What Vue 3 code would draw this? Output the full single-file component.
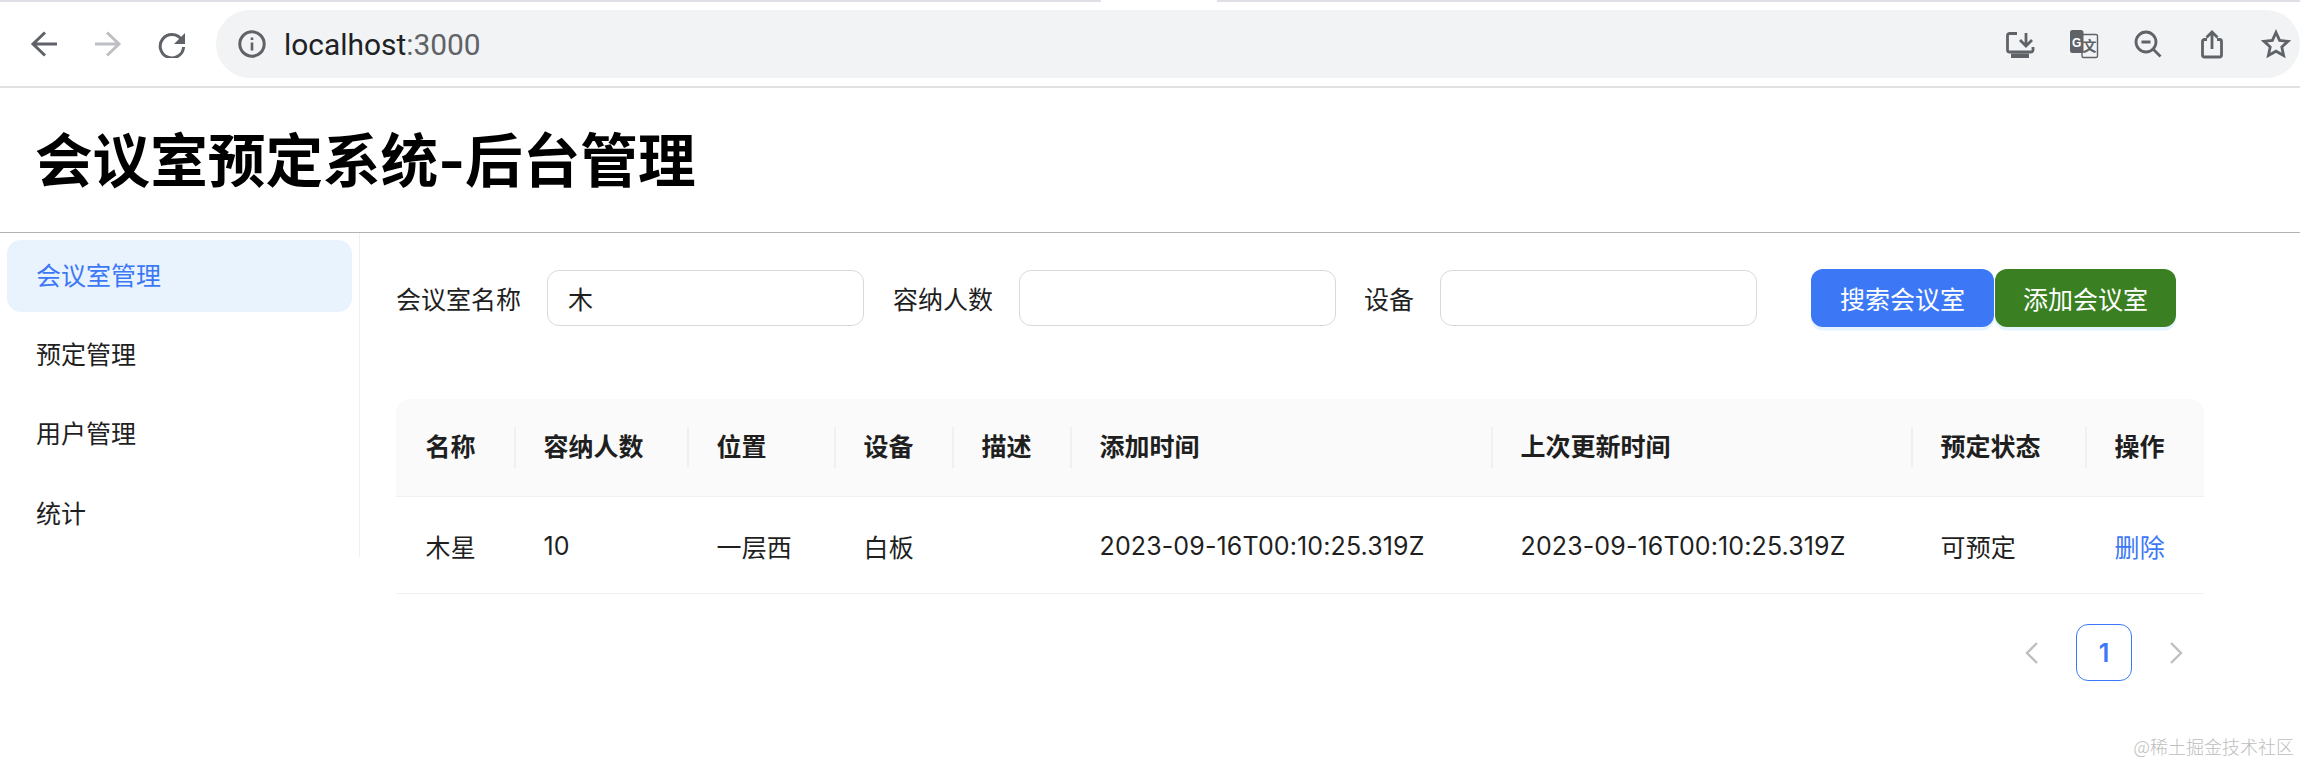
<script setup>
const menu = ['会议室管理', '预定管理', '用户管理', '统计']
const headers = ['名称', '容纳人数', '位置', '设备', '描述', '添加时间', '上次更新时间', '预定状态', '操作']
const cells = ['木星', '10', '一层西', '白板', '', '2023-09-16T00:10:25.319Z', '2023-09-16T00:10:25.319Z', '可预定']
</script>

<template>
  <div class="page">
    <div class="chrome">
      <div class="strip"><i></i><b></b><i></i></div>
      <div class="toolbar">
        <svg class="nav" viewBox="0 0 28 28"><path d="M15 2.500 3 14l12 11.500M3 14h24" stroke="#5f6368"/></svg>
        <svg class="nav" viewBox="0 0 28 28"><path d="M13 2.500 25 14 13 25.500M25 14H1" stroke="#bdbfc2"/></svg>
        <svg class="nav" viewBox="0 0 28 28">
          <path d="M23.500 9.500A11.700 11.700 0 1 0 25.600 17" stroke="#5f6368"/>
          <path d="M27 3v11H16z" fill="#5f6368"/>
        </svg>
        <div class="omnibox">
          <svg class="info" viewBox="0 0 28 28">
            <circle cx="14" cy="14" r="12.200" stroke="#5f6368" stroke-width="3" fill="none"/>
            <path d="M12.700 12.500h2.600v8h-2.600zM12.700 7.500h2.600v2.600h-2.600z" fill="#5f6368"/>
          </svg>
          <span class="url">localhost<em>:3000</em></span>
          <div class="actions">
            <svg viewBox="0 0 30 30">
              <path d="M12 4.500H4.500a2 2 0 0 0-2 2V21a2 2 0 0 0 2 2H26a2 2 0 0 0 2-2v-3" class="s"/>
              <rect x="6" y="24.500" width="18" height="4.500" fill="#5f6368"/>
              <path d="M21 4v12M15 11l6 6 6-6" class="s"/>
            </svg>
            <svg viewBox="0 0 30 30">
              <rect x="13" y="5.500" width="15.500" height="23" rx="1.500" fill="#f1f3f4" stroke="#5f6368" stroke-width="1.400"/>
              <path d="M3.500 1H12a2.500 2.500 0 0 1 2.500 2.500V24H3.500A2.500 2.500 0 0 1 1 21.500v-18A2.500 2.500 0 0 1 3.500 1z" fill="#5f6368"/>
              <text x="7.700" y="17.500" class="g">G</text>
              <text x="13.500" y="21.500" class="wen">文</text>
            </svg>
            <svg viewBox="0 0 30 30">
              <circle cx="13" cy="13" r="10" class="s"/>
              <path d="M20.500 20.500 27.500 27.500M8.500 13h9" class="s"/>
            </svg>
            <svg viewBox="0 0 30 30">
              <path d="M10 10.500H7.500a2 2 0 0 0-2 2V26a2 2 0 0 0 2 2h15a2 2 0 0 0 2-2V12.500a2 2 0 0 0-2-2H20" class="s"/>
              <path d="M15 20V3M9.500 8.500 15 3l5.500 5.500" class="s"/>
            </svg>
            <svg viewBox="0 0 30 30">
              <path d="M15 3.500 18.600 11.400 27 12.300 20.800 18 22.600 26.500 15 22.200 7.400 26.500 9.200 18 3 12.300 11.400 11.400Z" class="s"/>
            </svg>
          </div>
        </div>
      </div>
    </div>

    <header class="head">
      <h1>会议室预定系统-后台管理</h1>
    </header>

    <div class="body">
      <aside class="side">
        <div v-for="(m, i) in menu" :key="m" class="item" :class="{ on: i === 0 }">{{ m }}</div>
      </aside>

      <main class="main">
        <form class="filter" @submit.prevent>
          <label>会议室名称</label>
          <input class="field" value="木" />
          <label class="l2">容纳人数</label>
          <input class="field" />
          <label class="l3">设备</label>
          <input class="field" />
          <button class="btn blue" type="button">搜索会议室</button>
          <button class="btn green" type="button">添加会议室</button>
        </form>

        <div class="table">
          <div v-for="(h, i) in headers" :key="h" class="th" :class="{ first: i === 0 }">{{ h }}</div>
          <div v-for="(c, i) in cells" :key="i" class="td">{{ c }}</div>
          <div class="td link">删除</div>
        </div>

        <div class="pager">
          <div class="pg"><svg viewBox="0 0 14 24"><path d="M12 2 2 12l10 10"/></svg></div>
          <div class="pg cur">1</div>
          <div class="pg"><svg viewBox="0 0 14 24"><path d="m2 2 10 10L2 22"/></svg></div>
        </div>
      </main>
    </div>

    <div class="mark">@稀土掘金技术社区</div>
  </div>
</template>

<style>
html, body { margin: 0; background: #fff; overflow: hidden; }
</style>

<style scoped>
.page {
  position: relative;
  width: 2300px;
  height: 762px;
  font-family: Inter, "Noto Sans CJK SC", sans-serif;
  font-size: 25px;
  color: #1f1f1f;
  overflow: hidden;
}
.chrome { height: 88px; box-sizing: border-box; border-bottom: 2px solid #dfe1e3; }
.strip { display: flex; height: 2px; }
.strip i { flex: 1; background: #dfe0e6; }
.strip i:first-child { flex: none; width: 1101px; }
.strip b { width: 116px; }
.toolbar { display: flex; align-items: center; height: 84px; padding-left: 30px; }
.nav { width: 28px; height: 28px; margin-right: 36px; fill: none; stroke-width: 3; flex: none; }
.nav:nth-child(3) { margin-right: 30px; }
.omnibox {
  flex: 1;
  height: 68px;
  display: flex;
  align-items: center;
  padding: 0 9px 0 22px;
  background: #f1f3f4;
  border-radius: 34px;
}
.info { width: 28px; height: 28px; }
.url { margin-left: 18px; font: 29.900px Roboto, sans-serif; color: #202124; }
.url em { font-style: normal; color: #5f6368; }
.actions { margin-left: auto; display: flex; gap: 34px; }
.actions svg { width: 30px; height: 30px; }
.s { fill: none; stroke: #5f6368; stroke-width: 2.800; }
.g { font: 700 12px "Liberation Sans", sans-serif; fill: #fff; text-anchor: middle; }
.wen { font: 700 14px "Noto Sans CJK SC", sans-serif; fill: #5f6368; }

.head {
  height: 145px;
  box-sizing: border-box;
  border-bottom: 1px solid #b3b3b3;
  padding: 4px 0 0 35px;
  display: flex;
  align-items: center;
}
h1 { margin: 0; font-size: 57.600px; font-weight: 700; color: #000; line-height: 1; }

.body { display: flex; align-items: flex-start; }
.side {
  width: 360px;
  flex: none;
  box-sizing: border-box;
  border-right: 1px solid #f0f0f0;
  padding: 7px;
  display: flex;
  flex-direction: column;
  gap: 7.200px;
}
.item {
  height: 72px;
  line-height: 72px;
  padding-left: 29px;
  border-radius: 14px;
}
.item.on { background: #e8f3fe; color: #3c78f6; }

.main { width: 1808px; margin-left: 36px; padding-top: 36px; }
.filter { display: flex; align-items: center; height: 58px; }
.filter label { margin-right: 26px; }
.l2 { margin-left: 29px; }
.l3 { margin-left: 28px; }
.field {
  width: 317px;
  height: 56px;
  box-sizing: border-box;
  border: 1.500px solid #d9d9d9;
  border-radius: 12px;
  padding: 0 20px;
  font: inherit;
  color: #1f1f1f;
  outline: none;
  background: #fff;
}
.btn {
  height: 58px;
  border: 0;
  border-radius: 12px;
  color: #fff;
  font: inherit;
  padding: 0;
  box-shadow: 0 3.600px 0 rgba(5, 145, 255, .1);
}
.blue { background: #3c78f6; margin-left: 54px; width: 183px; }
.green { background: #3a7f22; margin-left: 1px; width: 181px; }

.table {
  display: grid;
  grid-template-columns: 118px 173px 147px 118px 118px 421px 420px 174px 119px;
  margin-top: 72px;
}
.th, .td { padding-left: 29.500px; display: flex; align-items: center; position: relative; }
.th {
  height: 98px;
  box-sizing: border-box;
  padding-bottom: 6px;
  background: #fafafa;
  font-weight: 600;
  border-bottom: 1.500px solid #f0f0f0;
}
.th:first-child { border-top-left-radius: 14px; }
.th:nth-child(9) { border-top-right-radius: 14px; }
.th:not(.first)::before {
  content: "";
  position: absolute;
  left: 0;
  top: 28px;
  width: 1.500px;
  height: 41px;
  background: #f0f0f0;
}
.td {
  height: 97px;
  box-sizing: border-box;
  padding-top: 1px;
  border-bottom: 1.500px solid #f0f0f0;
  letter-spacing: .13px;
}
.link { color: #3c78f6; }

.pager { display: flex; justify-content: flex-end; gap: 16px; margin-top: 30px; }
.pg { width: 56px; height: 57px; box-sizing: border-box; display: flex; align-items: center; justify-content: center; }
.pg svg { width: 14px; height: 24px; fill: none; stroke: #bfbfbf; stroke-width: 2.400; }
.cur { border: 1.500px solid #3c78f6; border-radius: 12px; color: #3c78f6; font-weight: 600; }

.mark {
  position: absolute;
  right: 6px;
  top: 733px;
  font: 300 18px/26px "Noto Sans CJK SC", sans-serif;
  color: #bdbdbd;
}
</style>
